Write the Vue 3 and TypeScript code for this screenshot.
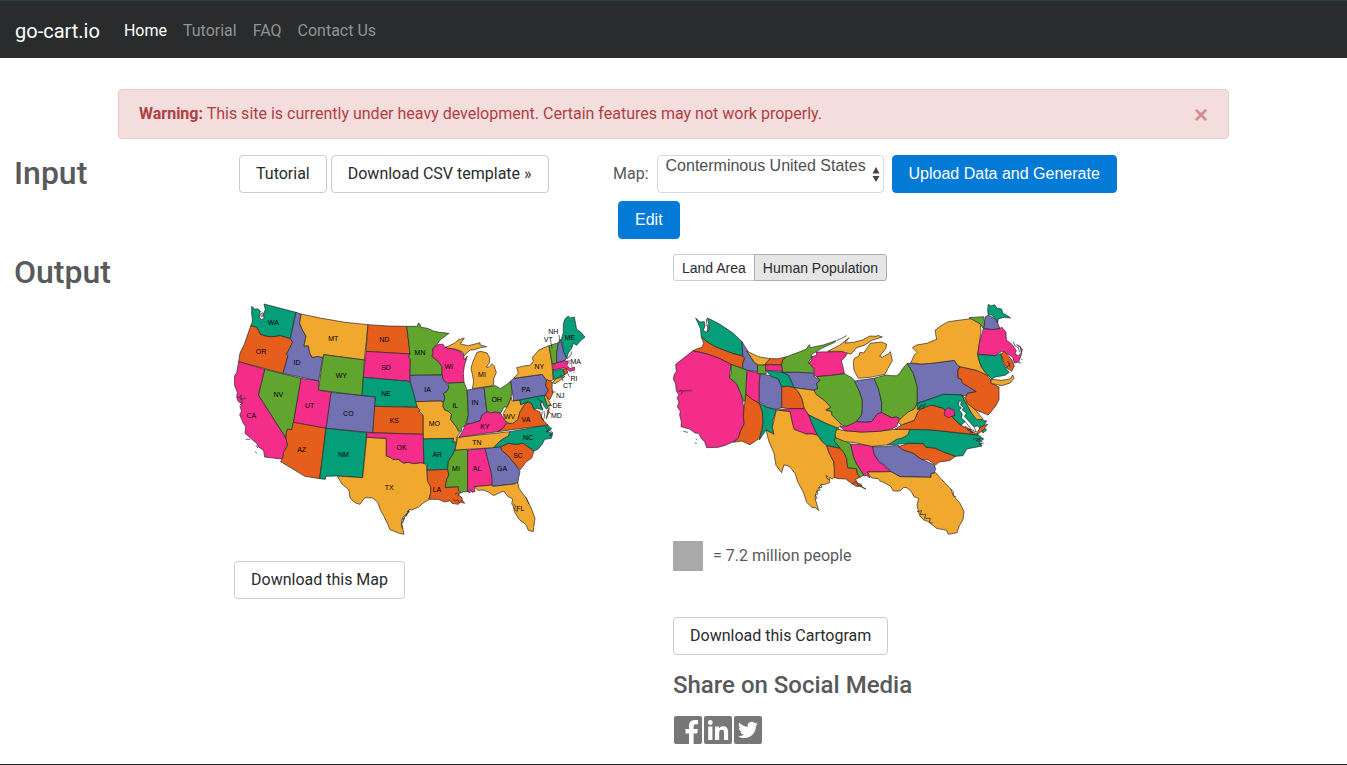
<script setup lang="ts">
import { ref } from 'vue'

type Shape = [color: string, points: string]
type Label = [text: string, x: number, y: number]

const T = '#049e78'
const O = '#e55e1b'
const P = '#7271b1'
const K = '#f42d8b'
const G = '#61a52f'
const Y = '#f0a82e'

const alertOpen = ref(true)
const mapName = ref('Conterminous United States')
const dataset = ref('Human Population')
const datasets = ['Land Area', 'Human Population']
const navLinks = ['Home', 'Tutorial', 'FAQ', 'Contact Us']

const landStates: Shape[] = [
  [T, '80,34 90,43 98,41 106,48 102,66 109,74 117,70 115,57 121,44 117,27 213,52 196,131 176,125 165,122 148,125 128,125 106,118 97,100 90,95 77,93 83,78 80,58'],
  [O, '77,93 90,95 97,100 106,118 128,125 148,125 165,122 196,131 203,142 194,160 184,178 189,182 174,235 41,200 45,174 58,148'],
  [P, '213,52 228,57 224,85 233,106 243,123 237,153 250,152 254,173 261,187 280,184 293,188 281,258 174,235 189,182 184,178 194,160 203,142 196,131'],
  [Y, '228,57 290,70 360,82 429,89 418,195 296,179 293,188 280,184 261,187 254,173 250,152 237,153 243,123 233,106 224,85'],
  [G, '296,179 418,195 411,302 280,285'],
  [O, '429,89 490,93 545,94 549,125 552,150 555,177 423,169'],
  [K, '423,169 555,177 551,185 556,193 555,262 543,257 532,258 520,256 415,247'],
  [T, '415,247 520,256 532,258 543,257 555,262 563,278 568,303 577,337 447,334 451,306 411,302'],
  [G, '545,94 577,94 580,84 585,88 588,97 608,100 625,108 643,112 672,115 645,135 635,150 623,162 624,172 621,184 640,200 651,215 652,240 555,241 556,193 551,185 555,177 549,125'],
  [P, '555,241 652,240 656,255 664,265 672,277 666,289 655,296 660,308 655,323 648,318 572,320 566,295 560,275 556,262'],
  [K, '635,150 653,147 660,156 685,162 705,168 716,180 718,195 727,183 718,213 715,235 717,262 668,265 655,255 651,235 651,215 640,200 621,184 624,172 623,162'],
  [Y, '660,158 690,144 700,135 718,129 706,147 730,152 750,147 765,143 765,150 785,155 767,158 745,165 735,165 717,182 713,171 690,162'],
  [Y, '752,181 756,172 767,169 786,174 794,188 793,204 784,216 790,217 801,206 807,212 814,233 807,248 805,272 742,281 746,259 742,238 738,220 743,202'],
  [G, '668,265 717,262 726,285 729,335 730,360 724,378 720,393 711,397 708,412 698,404 692,393 676,374 679,358 671,350 659,345 653,333 655,323 660,308 655,296 666,289 672,277'],
  [P, '727,285 777,278 786,350 780,359 771,360 765,378 754,380 745,384 724,388 730,360 729,335'],
  [G, '777,278 812,272 826,281 846,268 857,258 862,288 858,307 853,323 846,336 837,336 827,355 811,351 796,354 786,350'],
  [Y, '572,320 648,318 655,323 653,333 659,345 671,350 679,358 676,374 692,393 698,404 704,415 696,427 695,442 684,440 686,430 594,432 594,360 580,346'],
  [O, '447,334 577,337 584,344 581,352 594,363 594,418 443,413'],
  [P, '318,292 451,306 443,413 303,400'],
  [K, '227,250 281,258 280,285 318,292 303,400 205,382'],
  [G, '119,223 228,250 205,382 200,405 188,402 184,412 183,430 100,300'],
  [K, '41,200 119,223 100,300 183,430 188,452 180,463 179,475 170,492 119,486 116,467 100,455 95,445 60,415 62,395 55,385 44,359 50,348 45,335 52,326 40,320 35,307 37,292 27,267 28,244 35,233'],
  [O, '205,382 303,400 284,551 240,544 167,500 176,484 174,474 188,452 183,430 184,412 188,402 200,405'],
  [T, '303,400 425,413 413,548 337,543 303,544 301,553 284,551'],
  [Y, '425,427 484,430 484,483 497,487 503,493 520,493 535,504 550,502 568,506 586,503 599,506 606,514 607,550 617,575 617,595 611,614 592,626 580,637 569,641 560,645 552,644 550,653 534,666 529,680 532,694 537,718 523,715 495,704 489,689 476,662 466,645 458,622 443,609 420,608 405,628 390,623 375,609 372,585 350,566 337,543 413,548'],
  [K, '425,413 594,418 596,445 597,504 586,503 568,506 550,502 535,504 520,493 503,493 497,487 484,483 484,430 425,427'],
  [T, '594,432 686,430 682,442 695,442 690,465 682,480 670,499 668,523 606,526 606,508 597,504'],
  [O, '606,526 668,523 672,540 665,553 661,577 700,575 701,588 708,592 699,599 710,607 713,617 719,625 706,621 700,628 681,625 675,617 659,621 640,613 612,613 617,595 617,575 608,560'],
  [G, '690,465 728,463 728,590 715,590 708,594 701,588 700,575 661,577 665,553 672,540 668,523 670,499 682,480'],
  [K, '728,465 780,460 796,517 802,540 802,570 748,575 750,590 741,592 737,584 735,593 728,590'],
  [P, '780,460 827,455 830,465 850,483 860,495 873,510 885,530 881,548 878,566 867,567 802,574 800,540'],
  [Y, '748,575 802,570 803,574 867,567 878,562 882,580 905,612 919,640 930,670 926,698 925,710 910,706 903,689 882,673 868,650 865,635 860,626 863,612 848,604 836,588 820,595 806,602 792,592 775,585 758,586'],
  [O, '827,455 850,445 872,448 895,445 927,468 920,489 903,501 885,525 873,510 860,495 850,483 830,465'],
  [T, '805,458 825,438 838,429 855,410 968,390 980,402 966,410 983,415 979,430 959,433 952,447 939,463 927,468 895,445 872,448 850,445 827,455'],
  [Y, '697,427 855,410 850,423 838,429 825,438 805,458 690,465 695,442'],
  [K, '702,427 712,410 720,393 724,388 745,384 754,380 765,378 771,360 786,350 796,354 811,351 827,355 835,370 845,382 835,399 818,410 760,418'],
  [O, '845,385 862,386 878,374 885,350 900,326 909,320 920,326 928,344 944,350 950,366 956,377 968,390 818,410 835,399'],
  [Y, '835,355 846,336 853,323 858,307 862,318 885,315 887,329 901,323 909,320 900,326 885,350 878,374 862,386 850,384 838,375'],
  [P, '857,258 866,250 952,238 965,257 962,272 970,286 960,300 866,318'],
  [Y, '866,250 880,234 875,218 902,212 915,211 925,200 922,187 942,165 972,152 980,200 985,253 978,258 965,257 952,238'],
  [O, '965,253 982,262 981,279 984,294 974,314 960,303 970,286 962,272'],
  [T, '885,315 958,301 967,328 975,330 965,343 957,334 951,318 947,326 954,345 936,340 928,344 920,326 909,320 901,323 887,329'],
  [Y, '958,303 964,302 978,331 967,332'],
  [O, '968,348 973,338 970,355 964,371'],
  [G, '972,152 1000,143 996,174 996,203 982,207 977,181'],
  [P, '1000,143 1006,133 1014,162 1026,187 1019,197 995,203 995,175'],
  [T, '1009,133 1015,113 1015,87 1020,72 1030,63 1036,69 1048,66 1055,103 1067,111 1080,126 1065,139 1055,151 1045,145 1040,160 1030,174 1025,190 1017,174'],
  [K, '983,208 1019,197 1030,201 1026,211 1035,221 1048,216 1049,225 1035,229 1026,223 1018,218 984,225'],
  [T, '984,227 1015,222 1019,240 985,254'],
  [O, '1015,222 1024,219 1028,232 1019,240'],
  [Y, '982,263 994,251 1020,244 1007,255 990,266']
]

const populationStates: Shape[] = [
  [T, '92,69 105,81 118,80 119,96 115,106 126,113 132,103 131,87 127,69 142,76 165,88 205,115 231,140 233,182 205,176 175,165 150,155 125,140 109,126 106,100'],
  [O, '109,126 125,140 150,155 175,165 205,176 235,184 239,190 234,202 232,220 198,208 165,191 130,178 105,172 83,168 94,162 111,157 116,145'],
  [K, '83,168 105,172 130,178 165,191 198,208 193,248 215,268 229,300 237,340 235,366 238,385 227,407 220,429 205,440 181,451 160,457 125,458 119,440 110,432 101,415 90,414 74,402 48,395 49,380 44,360 46,348 37,335 42,321 36,308 42,300 34,288 32,267 25,252 28,238 34,230 32,208'],
  [O, '243,298 262,313 285,325 292,350 294,380 291,401 283,430 267,441 255,449 230,438 205,442 220,429 227,407 238,385 235,366 237,340'],
  [G, '198,208 245,225 244,275 240,317 236,320 229,300 215,265 193,248 198,235'],
  [K, '248,226 286,236 283,262 283,325 262,313 243,298 244,255'],
  [P, '286,236 330,245 340,252 350,275 352,338 330,343 305,337 283,320 283,262'],
  [P, '231,140 246,165 257,186 266,202 277,210 278,230 250,226 232,220 234,202 239,190 233,182'],
  [Y, '245,168 280,185 315,191 305,208 285,212 270,204 259,188'],
  [G, '277,210 302,210 302,226 304,236 278,236'],
  [O, '302,205 315,191 340,191 365,185 355,195 350,209 302,208'],
  [K, '302,209 350,210 353,230 330,227 302,226'],
  [T, '303,227 353,232 370,240 378,255 387,278 370,274 350,275 340,252 320,245'],
  [O, '350,275 370,274 387,278 400,290 411,311 418,341 380,342 350,338'],
  [G, '350,209 353,195 365,185 400,172 423,163 433,149 436,158 475,150 513,137 509,142 470,160 440,178 438,193 430,200 445,219 445,235 400,232 353,232'],
  [K, '440,185 455,181 454,171 530,170 548,173 540,187 529,197 534,215 538,236 500,241 455,245 447,240 448,221 430,203 440,198'],
  [Y, '488,169 525,150 552,128 540,144 565,142 590,136 615,123 634,124 638,121 652,126 620,136 600,150 575,158 558,177 541,173 533,169'],
  [Y, '565,200 568,190 581,184 585,172 596,174 616,145 650,141 665,148 662,161 644,184 652,187 670,176 676,170 682,197 669,220 660,238 615,247 580,250 567,226'],
  [P, '353,232 400,232 445,235 449,246 466,256 455,265 458,281 447,286 387,278 378,255 370,240'],
  [G, '455,245 500,241 538,236 560,248 571,260 582,286 592,315 592,340 590,360 575,379 565,385 545,394 530,390 521,380 500,360 500,350 482,345 497,337 482,320 464,306 453,298 447,286 458,281 455,265 466,256'],
  [P, '568,258 627,250 640,280 650,322 650,353 638,356 620,380 600,382 575,379 590,360 592,340 592,315 582,286'],
  [G, '627,250 664,240 680,242 695,242 704,235 715,218 727,205 745,235 757,275 757,325 747,343 728,352 705,373 695,366 680,368 650,353 650,322 640,280'],
  [Y, '387,278 447,286 453,298 464,306 482,320 497,337 482,345 500,350 500,360 521,380 530,390 515,402 480,384 431,360 418,341 411,311 400,290'],
  [K, '334,345 380,341 418,341 431,360 443,390 457,420 442,417 423,417 410,412 400,408 385,402 381,380 375,350'],
  [T, '431,360 480,384 520,400 520,407 511,418 514,426 508,438 519,451 525,460 485,452 470,439 457,420 443,390'],
  [T, '283,325 305,337 334,345 324,375 322,397 327,418 303,405 283,435 292,401 294,380 292,350'],
  [Y, '334,345 375,350 381,380 387,403 400,408 410,412 423,417 442,417 457,420 470,439 485,452 493,475 506,500 508,517 510,546 502,552 494,547 494,563 480,568 468,569 459,583 451,600 451,613 461,647 453,639 440,637 425,622 416,594 398,560 390,535 374,515 357,509 350,533 333,511 327,475 311,437 303,405 327,418 322,397'],
  [O, '485,452 525,460 537,473 545,490 548,518 575,521 577,537 585,547 572,552 575,563 588,568 592,577 603,582 585,574 573,574 557,563 542,552 522,551 508,548 508,517 506,500 493,475'],
  [G, '511,427 545,440 557,447 566,487 575,507 597,540 585,547 577,537 575,521 548,518 545,490 537,473 519,451 508,438'],
  [K, '557,447 590,449 623,453 628,478 642,500 660,512 678,530 607,531 615,549 604,541 597,543 590,529 575,507 566,487'],
  [P, '623,455 660,455 700,450 713,464 745,475 770,493 808,510 812,523 807,534 797,536 798,547 705,545 678,530 660,512 642,500 628,478'],
  [Y, '607,531 678,530 705,545 798,547 799,536 812,533 827,550 841,565 858,583 864,600 885,625 897,650 894,674 883,692 876,713 850,718 845,706 815,700 800,688 788,679 776,675 764,662 760,649 756,630 761,610 747,605 738,588 725,578 716,577 705,588 685,588 677,574 660,564 645,558 640,551 620,549'],
  [O, '700,455 730,445 775,446 783,457 810,459 833,470 872,484 853,497 822,501 812,510 790,495 770,493 745,475 713,464'],
  [T, '735,402 790,404 840,409 940,420 956,432 943,440 951,453 925,458 905,462 894,482 872,484 833,470 810,459 783,457 775,446 730,445 665,450 680,434 716,422'],
  [Y, '515,402 540,407 590,411 640,409 690,403 735,402 728,420 710,430 695,433 680,443 665,450 620,454 570,443 540,440 511,427 511,417'],
  [K, '525,395 545,394 565,385 575,380 600,382 620,380 638,356 650,353 680,368 695,366 705,373 699,382 695,394 680,402 640,409 590,411 540,407'],
  [O, '690,403 709,390 731,382 748,376 758,351 770,335 800,330 832,339 857,360 871,376 888,391 911,402 940,420 840,409 790,404'],
  [Y, '705,373 728,352 747,343 757,325 781,321 795,315 758,351 748,376 731,382 709,390 699,382'],
  [P, '727,205 770,207 800,205 868,196 877,210 885,215 879,225 879,249 888,252 893,265 910,275 934,290 907,295 904,303 880,299 835,298 796,312 757,325 757,275 745,235'],
  [O, '885,215 935,226 965,240 976,252 980,265 1002,276 1002,314 992,333 970,360 930,344 907,325 901,310 907,295 934,290 910,275 893,265 888,252 879,249 879,225'],
  [Y, '737,204 748,180 756,172 742,158 755,150 785,145 815,133 810,106 828,92 850,80 910,72 930,69 946,87 948,110 943,145 938,180 949,218 980,246 965,240 935,226 885,215 877,210 868,196 800,205 770,207'],
  [T, '757,325 796,312 835,298 890,300 901,321 920,355 945,374 965,378 955,395 965,405 954,414 939,393 923,395 903,377 888,391 871,376 857,360 832,339 800,330 770,341 757,344'],
  [Y, '890,300 901,310 907,325 930,344 955,373 935,374 920,355'],
  [K, '840,345 850,338 866,345 870,361 850,368 838,360'],
  [O, '935,415 946,397 968,387 957,403 939,417'],
  [G, '912,68 955,65 960,85 955,101 946,87'],
  [P, '960,66 970,60 992,73 998,84 1005,101 980,104 957,100'],
  [T, '969,58 968,43 970,28 978,33 989,29 996,40 1010,42 1013,55 1024,60 1037,69 1018,67 1000,71 998,84 992,73 980,60'],
  [K, '955,101 980,104 1005,101 1010,96 1023,112 1024,135 1042,149 1054,167 1050,178 1060,182 1069,174 1066,155 1055,149 1072,162 1068,182 1061,201 1048,204 1043,186 1030,178 1010,169 990,182 938,178 943,145'],
  [T, '938,178 990,182 1008,176 1013,203 1025,223 1033,232 1020,241 990,246 981,252 958,230 944,204'],
  [O, '1008,178 1018,169 1030,182 1041,196 1048,213 1040,229 1028,221 1017,205'],
  [Y, '978,253 1010,256 1035,252 1043,240 1047,250 1035,264 1010,272 978,265']
]

const landCoast = 'M104,68l2,-10 6,-5 -2,13 8,-9 M37,306l6,2 6,-8 -2,13 7,-2 10,-1 M44,330l8,-5 -2,-15 M62,433l14,0 M93,451l6,8 M91,469l4,6 M552,644l-5,6 5,-1 -10,11 5,0 -14,13 4,-2 -8,17 3,14 M553,648l-13,17 -7,19 M684,613l8,5 6,-4 5,10 8,-8 M690,598l6,-4 7,5 -5,3 M952,350l-4,18 9,10 M957,348l2,16 -3,9 M960,395l11,7 -8,9 12,-4 8,6 -11,10 9,-3 M865,625l6,8 -2,10 9,8 M935,310l15,9 -4,14 8,8 M1027,192l5,-8 5,-2 3,-12 M902,605l10,22'
const populationCoast = 'M124,72l1,14 4,6 M121,90l8,4 -3,17 5,-7 -4,-12 M40,290l8,-5 4,3 30,-1 M48,299l4,-8 -5,-2 M55,409l14,3 M92,431l5,4 M89,444l6,1 M468,569l3,8 -10,1 5,7 -11,3 4,9 -8,4 6,8 -7,4 M490,545l-7,-3 3,9 8,4 M560,568l15,-9 3,13 13,0 M515,137l30,-15 M756,650l14,-3 -5,12 18,-1 -5,12 18,0 -3,12 10,2 M858,583l7,7 0,12 9,4 M899,393l20,12 -12,-1 17,9 -10,1 M924,432l24,-2 -14,7 18,2 -10,9 14,-4 M770,328l-10,13 22,-15 -9,17 M1022,219l14,-12 -8,-8 8,18 M1045,140l5,13 10,5 4,14 M1060,203l9,1 M1069,192l3,3'
const bayShape = '883,317 889,319 887,330 896,337 892,345 904,355 898,364 908,375 928,397 934,411 920,404 900,379 889,369 892,357 883,346 889,338 880,331'

const labels: Label[] = [
  ['WA', 145, 90], ['OR', 108, 177], ['ID', 216, 210], ['MT', 325, 137], ['ND', 478, 140], ['SD', 483, 224],
  ['WY', 349, 248], ['NE', 483, 303], ['NV', 160, 307], ['UT', 254, 338], ['CO', 370, 362], ['KS', 508, 383],
  ['CA', 79, 369], ['AZ', 230, 470], ['NM', 355, 485], ['TX', 493, 584], ['OK', 530, 465], ['MN', 585, 180],
  ['WI', 671, 221], ['MI', 771, 245], ['IA', 608, 290], ['IL', 691, 338], ['IN', 750, 329], ['OH', 815, 321],
  ['PA', 903, 290], ['NY', 943, 221], ['MO', 628, 392], ['KY', 780, 401], ['WV', 854, 371], ['VA', 903, 381],
  ['NC', 909, 434], ['TN', 756, 449], ['AR', 637, 485], ['LA', 636, 590], ['MI', 693, 527], ['AL', 756, 527],
  ['GA', 831, 527], ['SC', 879, 488], ['FL', 886, 648], ['ME', 1035, 134], ['NH', 985, 116], ['VT', 970, 140],
  ['MA', 1052, 206], ['RI', 1047, 257], ['CT', 1028, 278], ['NJ', 1006, 308], ['DE', 997, 338], ['MD', 994, 368]
]
const leaders = 'M978,142l3,18 M1002,120l3,24 M1024,198h14 M1025,230l9,16 M1007,240l8,18 M980,291h12 M973,329l9,2 M968,346l10,12'
</script>

<template>
  <div class="page">
    <header class="nav">
      <a class="brand" href="#">go-cart.io</a>
      <nav class="links" aria-label="Main">
        <a v-for="(link, i) in navLinks" :key="link" href="#" :class="{ current: i === 0 }">{{ link }}</a>
      </nav>
    </header>

    <main>
      <div v-if="alertOpen" class="alert" role="alert">
        <p><strong>Warning:</strong> This site is currently under heavy development. Certain features may not work properly.</p>
        <button class="close" type="button" aria-label="Close" @click="alertOpen = false">×</button>
      </div>

      <section class="row input-row">
        <h2>Input</h2>
        <div class="templates">
          <button class="btn" type="button">Tutorial</button>
          <button class="btn" type="button">Download CSV template »</button>
        </div>
        <form class="controls" @submit.prevent>
          <label for="map">Map:</label>
          <span class="select-wrap">
            <select id="map" v-model="mapName">
              <option>Conterminous United States</option>
            </select>
            <svg class="arrows" viewBox="0 0 8 16" aria-hidden="true"><path d="M4 0 7.500 6.500H.5ZM4 15 .5 9h7Z" fill="#444" /></svg>
          </span>
          <button class="btn primary" type="submit">Upload Data and Generate</button>
          <button class="btn primary edit" type="button">Edit</button>
        </form>
      </section>

      <section class="row output-row">
        <h2>Output</h2>
        <div class="map-col">
          <svg class="map land" viewBox="27 15 1071 720" role="img" aria-label="Map of the conterminous United States">
            <polygon v-for="(s, i) in landStates" :key="i" class="state" :fill="s[0]" :points="s[1]" />
            <path class="coast" :d="landCoast" />
            <path class="cape" d="M1030,203l9,4 2,11 8,3 M1034,232l5,-2 M1045,231l5,1" />
            <path class="coast" :d="leaders" />
            <text v-for="(l, i) in labels" :key="i" :x="l[1]" :y="l[2]">{{ l[0] }}</text>
          </svg>
          <button class="btn" type="button">Download this Map</button>
        </div>
        <div class="cart-col">
          <div class="toggle" role="group" aria-label="Dataset">
            <button
              v-for="d in datasets"
              :key="d"
              type="button"
              :class="{ active: d === dataset }"
              :aria-pressed="d === dataset"
              @click="dataset = d"
            >{{ d }}</button>
          </div>
          <svg class="map cart" viewBox="24 15 1053 720" role="img" aria-label="Cartogram of human population">
            <polygon v-for="(s, i) in populationStates" :key="i" class="state" :fill="s[0]" :points="s[1]" />
            <polygon class="state" fill="#fff" :points="bayShape" />
            <path class="coast" :d="populationCoast" />
          </svg>
          <p class="legend"><span class="swatch"></span>= 7.2 million people</p>
          <button class="btn" type="button">Download this Cartogram</button>
          <h4>Share on Social Media</h4>
          <div class="social">
            <a href="#" aria-label="Facebook">
              <svg viewBox="0 0 28 28"><rect width="28" height="28" rx="2" fill="#777" /><path d="M15 28V17.500h-3.500V13H15v-3c0-4 2.300-6 6-6 1.500 0 2.500.1 3 .2v4h-2.200c-1.700 0-2.200.9-2.200 2.200V13h4.200l-.6 4.500h-3.600V28Z" fill="#fff" /></svg>
            </a>
            <a href="#" aria-label="LinkedIn">
              <svg viewBox="0 0 28 28"><rect width="28" height="28" rx="2" fill="#777" /><circle cx="6.300" cy="6.500" r="2.400" fill="#fff" /><path d="M4.200 10.500h4.200V24H4.200ZM11 10.500h4v1.900c.8-1.300 2.200-2.200 4.100-2.200 4 0 5 2.600 5 6.300V24H20v-6.800c0-1.800-.2-3.500-2.300-3.500s-2.500 1.700-2.500 3.400V24H11Z" fill="#fff" /></svg>
            </a>
            <a href="#" aria-label="Twitter">
              <svg viewBox="0 0 28 28"><rect width="28" height="28" rx="2" fill="#777" /><path transform="translate(4 4) scale(.83)" d="M23.950 4.570a10 10 0 0 1-2.820.77 4.960 4.960 0 0 0 2.160-2.720c-.95.55-2 .95-3.130 1.180a4.920 4.920 0 0 0-8.380 4.480A13.900 13.900 0 0 1 1.640 3.160a4.920 4.920 0 0 0 1.520 6.570 4.900 4.900 0 0 1-2.230-.61v.06a4.920 4.920 0 0 0 3.950 4.830 5 5 0 0 1-2.210.08 4.940 4.940 0 0 0 4.600 3.420A9.870 9.870 0 0 1 0 19.540a14 14 0 0 0 7.550 2.210c9.050 0 14-7.500 14-13.990 0-.21 0-.42-.02-.63a9.940 9.940 0 0 0 2.420-2.560Z" fill="#fff" /></svg>
            </a>
          </div>
        </div>
      </section>
    </main>
  </div>
</template>

<style>
body {
  margin: 0;
  background: #fff;
}
</style>

<style scoped>
* {
  box-sizing: border-box;
}
.page {
  min-height: 100vh;
  border-bottom: 1px solid #1c2429;
  color: #58595a;
  font: 16px/24px Roboto, Inter, sans-serif;
}
.nav {
  display: flex;
  align-items: center;
  gap: 24px;
  height: 58px;
  padding: 2px 15px 0;
  border-top: 1px solid #27404c;
  background: #292b2c;
}
.nav a {
  color: #929394;
  text-decoration: none;
}
.nav .brand {
  color: #fff;
  font-size: 20px;
}
.links {
  display: flex;
  gap: 16px;
}
.nav .links .current {
  color: #fff;
}
.alert {
  display: flex;
  align-items: center;
  justify-content: space-between;
  width: calc(100% - 30px);
  max-width: 1111px;
  min-height: 50px;
  margin: 31px auto 16px;
  padding: 0 20px;
  border: 1px solid #ebcccc;
  border-radius: 4px;
  background: #f3dddd;
  color: #b13f41;
}
.alert p {
  margin: 0;
}
.close {
  padding: 2px 0 0;
  border: 0;
  background: none;
  color: #d28e8f;
  font: bold 24px/24px "Liberation Sans", sans-serif;
}
.row {
  display: grid;
  padding-left: 14px;
}
.input-row {
  grid-template-columns: 225fr 374fr 531fr 203fr;
}
.output-row {
  grid-template-columns: 220fr 439fr 674fr;
  margin-top: 15px;
}
h2 {
  margin: 0;
  font-size: 32px;
  line-height: 36px;
  font-weight: 500;
}
.templates {
  display: flex;
  align-items: flex-start;
  gap: 4px;
}
.btn {
  height: 38px;
  padding: 0 16px;
  border: 1px solid #ccc;
  border-radius: 4px;
  background: #fff;
  color: #292b2c;
  font: inherit;
  white-space: nowrap;
}
.btn.primary {
  border-color: #027ad6;
  background: #027ad6;
  color: #fff;
  font: 16px/24px "Liberation Sans", Arial, sans-serif;
}
.controls {
  display: flex;
  flex-wrap: wrap;
  align-items: center;
  gap: 8px;
}
.select-wrap {
  position: relative;
}
select {
  display: block;
  width: 227px;
  height: 38px;
  padding: 0 16px 18px 8px;
  border: 1px solid #d9d9d9;
  border-radius: 4px;
  appearance: none;
  background: #fff;
  color: #4c5053;
  font: 16px "Liberation Sans", Arial, sans-serif;
}
.arrows {
  position: absolute;
  top: 12px;
  right: 4px;
  width: 8px;
  height: 16px;
  pointer-events: none;
}
.edit {
  margin-left: 5px;
}
.map-col,
.cart-col {
  display: flex;
  flex-direction: column;
  align-items: flex-start;
}
.map {
  display: block;
  height: 240px;
}
.land {
  width: 357px;
  margin: 46px 0 21px;
}
.cart {
  width: 351px;
  margin-top: 19px;
}
.state {
  stroke: #222;
  stroke-width: 2;
  stroke-linejoin: round;
}
.coast,
.cape {
  fill: none;
  stroke: #222;
  stroke-width: 2;
}
.cape {
  stroke: #f42d8b;
}
.map text {
  fill: #000;
  font: 21px "Liberation Sans", Arial, sans-serif;
  text-anchor: middle;
}
.toggle {
  display: flex;
  height: 27px;
}
.toggle button {
  padding: 0 8px;
  border: 1px solid #ccc;
  border-radius: 3px 0 0 3px;
  background: #fff;
  color: #292b2c;
  font: 14px "Liberation Sans", Arial, sans-serif;
}
.toggle button + button {
  margin-left: -1px;
  border-radius: 0 3px 3px 0;
}
.toggle .active {
  border-color: #adadad;
  background: #e6e6e6;
}
.legend {
  display: flex;
  align-items: center;
  gap: 10px;
  margin: 1px 0 46px;
}
.swatch {
  width: 30px;
  height: 30px;
  background: #aaa;
}
h4 {
  margin: 16px 0;
  font-size: 24px;
  line-height: 29px;
  font-weight: 500;
}
.social {
  display: flex;
  gap: 2px;
  padding-left: 1px;
}
.social a,
.social svg {
  display: block;
  width: 28px;
  height: 28px;
}
</style>
